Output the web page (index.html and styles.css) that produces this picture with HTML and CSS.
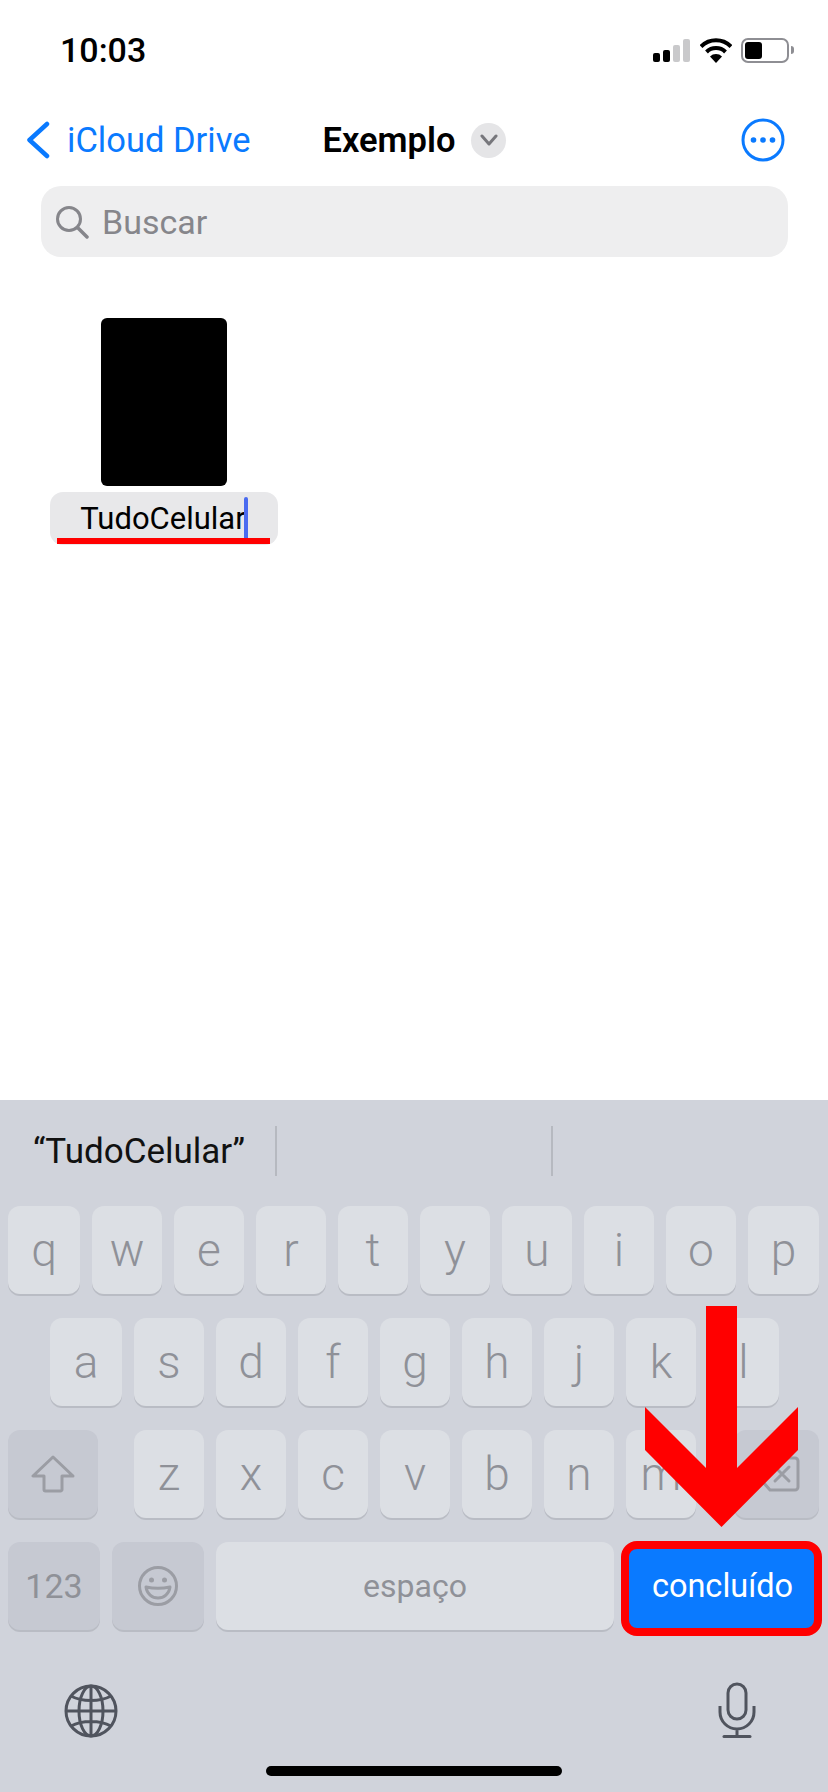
FILE: index.html
```html
<!DOCTYPE html>
<html lang="pt-BR">
<head>
    <meta charset="UTF-8">
    <meta name="viewport" content="width=device-width, initial-scale=1.0">
    <title>Exemplo</title>
    <link rel="stylesheet" href="styles.css">
</head>
<body>
    <div class="page">
        <div class="status-bar">
            <span class="time">10:03</span>
            <div class="status-icons">
                <div class="signal">
                    <span class="bar bar-1"></span>
                    <span class="bar bar-2"></span>
                    <span class="bar bar-3 bar-off"></span>
                    <span class="bar bar-4 bar-off"></span>
                </div>
                <svg class="wifi" width="32" height="25" viewBox="0 0 32 25">
                    <path d="M1 8.500a21 21 0 0 1 30 0" fill="none" stroke="#000" stroke-width="4"/>
                    <path d="M6.500 14a13.500 13.500 0 0 1 19 0" fill="none" stroke="#000" stroke-width="4"/>
                    <path d="M16 25l-6-6.500a8.500 8.500 0 0 1 12 0z" fill="#000"/>
                </svg>
                <div class="battery"><span class="battery-fill"></span></div>
                <span class="battery-nub"></span>
            </div>
        </div>

        <div class="nav-bar">
            <svg class="back-icon" width="25" height="38" viewBox="0 0 25 38">
                <path d="M22 3L4.500 19 22 35" fill="none" stroke="#0a7aff" stroke-width="4.500" stroke-linecap="round" stroke-linejoin="round"/>
            </svg>
            <span class="back-label">iCloud Drive</span>
            <span class="title">Exemplo</span>
            <span class="title-menu">
                <svg width="18" height="12" viewBox="0 0 18 12">
                    <path d="M2 2l7 8 7-8" fill="none" stroke="#77777c" stroke-width="3" stroke-linecap="round" stroke-linejoin="round"/>
                </svg>
            </span>
            <svg class="more-icon" width="44" height="44" viewBox="0 0 44 44">
                <circle cx="22" cy="22" r="20" fill="none" stroke="#0a7aff" stroke-width="3"/>
                <circle cx="12.500" cy="22" r="2.800" fill="#0a7aff"/>
                <circle cx="22" cy="22" r="2.800" fill="#0a7aff"/>
                <circle cx="31.500" cy="22" r="2.800" fill="#0a7aff"/>
            </svg>
        </div>

        <div class="search">
            <svg class="search-icon" width="34" height="34" viewBox="0 0 34 34">
                <circle cx="14" cy="14" r="11.500" fill="none" stroke="#86868b" stroke-width="3"/>
                <path d="M22.500 22.500L32 32" stroke="#86868b" stroke-width="3.500" stroke-linecap="round"/>
            </svg>
            <span class="search-text">Buscar</span>
        </div>

        <div class="file">
            <div class="file-thumb"></div>
            <div class="file-name">
                <span>TudoCelular</span><span class="caret"></span>
                <span class="underline"></span>
            </div>
        </div>

        <div class="keyboard">
            <div class="suggestions">
                <div class="suggestion">“TudoCelular”</div>
                <div class="suggestion"></div>
                <div class="suggestion"></div>
            </div>

            <div class="row row-letters">
                <div class="key">q</div>
                <div class="key">w</div>
                <div class="key">e</div>
                <div class="key">r</div>
                <div class="key">t</div>
                <div class="key">y</div>
                <div class="key">u</div>
                <div class="key">i</div>
                <div class="key">o</div>
                <div class="key">p</div>
            </div>
            <div class="row row-letters row-home">
                <div class="key">a</div>
                <div class="key">s</div>
                <div class="key">d</div>
                <div class="key">f</div>
                <div class="key">g</div>
                <div class="key">h</div>
                <div class="key">j</div>
                <div class="key">k</div>
                <div class="key">l</div>
            </div>
            <div class="row">
                <div class="key key-dark key-shift">
                    <svg width="44" height="38" viewBox="0 0 44 38">
                        <path d="M22 2L2 21h11v13.500a1.500 1.500 0 0 0 1.500 1.500h15a1.500 1.500 0 0 0 1.500-1.500V21h11z" fill="none" stroke="#9b9da4" stroke-width="3" stroke-linejoin="round"/>
                    </svg>
                </div>
                <div class="letters">
                    <div class="key">z</div>
                    <div class="key">x</div>
                    <div class="key">c</div>
                    <div class="key">v</div>
                    <div class="key">b</div>
                    <div class="key">n</div>
                    <div class="key">m</div>
                </div>
                <div class="key key-dark key-delete">
                    <svg width="46" height="36" viewBox="0 0 46 36">
                        <path d="M16 2h25a3 3 0 0 1 3 3v26a3 3 0 0 1-3 3H16L2 18z" fill="none" stroke="#9b9da4" stroke-width="3" stroke-linejoin="round"/>
                        <path d="M21 11l14 14M35 11L21 25" stroke="#9b9da4" stroke-width="3" stroke-linecap="round"/>
                    </svg>
                </div>
            </div>
            <div class="row">
                <div class="key key-dark key-numbers">123</div>
                <div class="key key-dark key-emoji">
                    <svg width="42" height="42" viewBox="0 0 42 42">
                        <circle cx="21" cy="21" r="18.500" fill="none" stroke="#9b9da4" stroke-width="3"/>
                        <circle cx="14.500" cy="15" r="2.500" fill="#9b9da4"/>
                        <circle cx="27.500" cy="15" r="2.500" fill="#9b9da4"/>
                        <path d="M9 22c7 1.500 17 1.500 24 0-1 7-6 11-12 11S10 29 9 22z" fill="none" stroke="#9b9da4" stroke-width="3" stroke-linejoin="round"/>
                    </svg>
                </div>
                <div class="key key-space">espaço</div>
                <div class="key key-done">concluído</div>
            </div>

            <div class="keyboard-bottom">
                <svg class="globe" width="54" height="54" viewBox="0 0 54 54">
                    <g fill="none" stroke="#50545e" stroke-width="3">
                        <circle cx="27" cy="27" r="25"/>
                        <ellipse cx="27" cy="27" rx="12" ry="25"/>
                        <path d="M27 2v50M2 27h50M7 12c11 6 29 6 40 0M7 42c11-6 29-6 40 0"/>
                    </g>
                </svg>
                <svg class="mic" width="38" height="56" viewBox="0 0 38 56">
                    <g fill="none" stroke="#50545e" stroke-width="3">
                        <rect x="10" y="2" width="18" height="35" rx="9"/>
                        <path d="M2 24v6a17 17 0 0 0 34 0v-6M19 47v7"/>
                        <path d="M6 54.500h26" stroke-linecap="round"/>
                    </g>
                </svg>
            </div>
            <div class="home-bar"></div>

            <svg class="arrow" width="153" height="221" viewBox="0 0 153 221">
                <polygon points="61,0 92,0 92,162 153,101 153,144 76.500,221 0,144 0,101 61,162" fill="#ff0000"/>
            </svg>
        </div>
    </div>
</body>
</html>
```

FILE: styles.css
```css
body {
    margin: 0;
    background-color: #fff;
    font-family: Roboto, "Liberation Sans", sans-serif;
}

.page {
    width: 828px;
    height: 1792px;
    display: flex;
    flex-direction: column;
    overflow: hidden;
}

.status-bar {
    height: 100px;
    display: flex;
    align-items: center;
    justify-content: space-between;
    padding: 0 34px 0 60px;
    box-sizing: border-box;
}

.time {
    font-size: 34px;
    font-weight: 500;
    color: #000;
}

.status-icons {
    display: flex;
    align-items: center;
}

.signal {
    display: flex;
    align-items: flex-end;
    gap: 3px;
    height: 23px;
    margin-right: 10px;
}

.bar {
    width: 7px;
    background: #000;
    border-radius: 2px;
}

.bar-1 { height: 9px; }
.bar-2 { height: 12px; }
.bar-3 { height: 17px; }
.bar-4 { height: 23px; }

.bar-off {
    background: #c9c9cb;
}

.wifi {
    margin-right: 9px;
}

.battery {
    width: 48px;
    height: 25px;
    padding: 2px;
    box-sizing: border-box;
    border: 2px solid #8e8e93;
    border-radius: 7px;
}

.battery-fill {
    display: block;
    width: 17px;
    height: 100%;
    background: #000;
    border-radius: 3px;
}

.battery-nub {
    width: 3px;
    height: 8px;
    margin-left: 2px;
    background: #8e8e93;
    border-radius: 0 3px 3px 0;
}

.nav-bar {
    height: 80px;
    display: flex;
    align-items: center;
    padding: 0 43px 0 25px;
}

.back-label {
    margin-left: 17px;
    font-size: 34.500px;
    color: #0a7aff;
}

.title {
    margin-left: 72px;
    font-size: 34.500px;
    font-weight: 600;
    color: #000;
}

.title-menu {
    width: 35px;
    height: 35px;
    margin-left: 16px;
    display: flex;
    align-items: center;
    justify-content: center;
    background: #e5e5e7;
    border-radius: 50%;
}

.more-icon {
    margin-left: auto;
}

.search {
    height: 71px;
    margin: 6px 40px 0 41px;
    padding-left: 14px;
    display: flex;
    align-items: center;
    background: #eeeeef;
    border-radius: 20px;
}

.search-text {
    margin-left: 13px;
    font-size: 34px;
    color: #86868b;
}

.file {
    width: 228px;
    margin: 61px 0 0 50px;
    display: flex;
    flex-direction: column;
    align-items: center;
}

.file-thumb {
    width: 126px;
    height: 168px;
    background: #000;
    border-radius: 6px;
}

.file-name {
    position: relative;
    width: 100%;
    height: 53px;
    margin-top: 6px;
    display: flex;
    align-items: center;
    justify-content: center;
    background: #e8e8ea;
    border-radius: 13px;
    font-size: 31px;
    color: #000;
}

.caret {
    width: 4px;
    height: 43px;
    margin-left: -2px;
    background: #4a6bf0;
    border-radius: 2px;
}

/* annotation drawn over the screenshot */
.underline {
    position: absolute;
    left: 7px;
    right: 8px;
    bottom: 1px;
    height: 6px;
    background: #ff0000;
}

.keyboard {
    position: relative;
    margin-top: auto;
    height: 692px;
    padding: 0 9px 0 8px;
    box-sizing: border-box;
    background: #d0d3db;
}

.suggestions {
    height: 106px;
    margin: 0 -9px 0 -8px;
    display: flex;
    align-items: flex-start;
    padding-top: 26px;
    box-sizing: border-box;
}

.suggestion {
    flex: 1;
    height: 50px;
    padding-left: 33px;
    box-sizing: border-box;
    display: flex;
    align-items: center;
    font-size: 35px;
    color: #111;
    border-right: 2px solid #b6b9c0;
}

.suggestion:last-child {
    border-right: none;
}

.row {
    display: flex;
    gap: 12px;
    margin-bottom: 24px;
}

.row-home {
    padding: 0 40px 0 42px;
}

.letters {
    display: flex;
    gap: 12px;
    margin: 0 26px 0 24px;
}

.key {
    flex: 0 0 70px;
    height: 88px;
    display: flex;
    align-items: center;
    justify-content: center;
    position: relative;
    background: #dcdfe4;
    border-radius: 12px;
    box-shadow: 0 2px 0 #b9bcc4;
    font-size: 46px;
    font-weight: 300;
    color: #8f9198;
}

.row-letters .key:first-child {
    flex-basis: 72px;
}

.row-letters .key:last-child {
    flex-basis: 71px;
}

.key-dark {
    background: #c6c9d2;
}

.key-shift {
    flex-basis: 90px;
}

.key-delete {
    flex-basis: 85px;
}

.key-numbers {
    flex-basis: 92px;
    font-size: 34px;
    font-weight: 400;
}

.key-emoji {
    flex-basis: 92px;
}

.key-space {
    flex-basis: 398px;
    font-size: 32px;
    font-weight: 400;
}

.key-done {
    flex-basis: 193px;
    background: #0a7aff;
    box-shadow: none;
    color: #fff;
    font-size: 32.500px;
    font-weight: 400;
}

/* annotation drawn over the screenshot */
.key-done::after {
    content: "";
    position: absolute;
    left: -5px;
    right: -3px;
    top: -1px;
    bottom: -6px;
    border: 8px solid #ff0000;
    border-radius: 16px;
}

/* margin here collapses with the last row's 24px */
.keyboard-bottom {
    display: flex;
    justify-content: space-between;
    align-items: flex-end;
    height: 56px;
    margin-top: 52px;
    padding: 0 63px 0 56px;
}

.home-bar {
    width: 296px;
    height: 10px;
    margin: 28px auto 0;
    background: #000;
    border-radius: 5px;
}

/* annotation drawn over the screenshot */
.arrow {
    position: absolute;
    top: 206px;
    left: 645px;
}
```
